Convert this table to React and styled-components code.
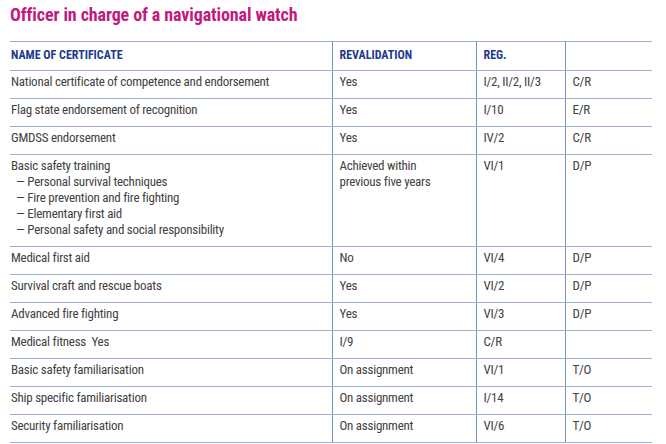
import styled, { createGlobalStyle } from "styled-components";

const GlobalStyle = createGlobalStyle`
  body {
    margin: 0;
    background: #ffffff;
    font-family: "Roboto", "Liberation Sans", sans-serif;
    font-stretch: 75%;
  }
`;

const Page = styled.div`
  padding: 4px 14px 0 10px;
`;

const Title = styled.h1`
  margin: 0;
  font-size: 18px;
  line-height: 22px;
  font-weight: 700;
  letter-spacing: -0.1px;
  color: #c1197e;
`;

const Table = styled.table`
  margin-top: 15px;
  width: 642px;
  border-collapse: collapse;
  table-layout: fixed;
  border-top: 1px solid #9fb1d3;
`;

const Th = styled.th`
  text-align: left;
  font-size: 12px;
  line-height: 16px;
  font-weight: 700;
  color: #1d3a8f;
  padding: 5px 0 7px ${(p) => (p.$first ? "1px" : "7px")};
  border-bottom: 1px solid #9fb1d3;
  border-left: ${(p) => (p.$first ? "none" : "1px solid #7890c2")};
  vertical-align: top;
`;

const Td = styled.td`
  font-size: 13px;
  line-height: 16px;
  letter-spacing: -0.25px;
  color: #424242;
  padding: 3px 0 8px ${(p) => (p.$first ? "1px" : "7px")};
  border-bottom: 1px solid #9fb1d3;
  border-left: ${(p) => (p.$first ? "none" : "1px solid #7890c2")};
  vertical-align: top;
`;

const SubItem = styled.div`
  padding-left: 5px;
`;

const Reval = styled.div`
  width: 100px;
`;

const rows = [
  ["National certificate of competence and endorsement", "Yes", "I/2, II/2, II/3", "C/R"],
  ["Flag state endorsement of recognition", "Yes", "I/10", "E/R"],
  ["GMDSS endorsement", "Yes", "IV/2", "C/R"],
  [
    "Basic safety training",
    "Achieved within previous five years",
    "VI/1",
    "D/P",
    [
      "Personal survival techniques",
      "Fire prevention and fire fighting",
      "Elementary first aid",
      "Personal safety and social responsibility",
    ],
  ],
  ["Medical first aid", "No", "VI/4", "D/P"],
  ["Survival craft and rescue boats", "Yes", "VI/2", "D/P"],
  ["Advanced fire fighting", "Yes", "VI/3", "D/P"],
  ["Medical fitness\u00a0 Yes", "I/9", "C/R", ""],
  ["Basic safety familiarisation", "On assignment", "VI/1", "T/O"],
  ["Ship specific familiarisation", "On assignment", "I/14", "T/O"],
  ["Security familiarisation", "On assignment", "VI/6", "T/O"],
];

export default function App() {
  return (
    <>
      <GlobalStyle />
      <Page>
        <Title>Officer in charge of a navigational watch</Title>
        <Table>
          <colgroup>
            <col style={{ width: 322 }} />
            <col style={{ width: 144 }} />
            <col style={{ width: 89 }} />
            <col style={{ width: 87 }} />
          </colgroup>
          <thead>
            <tr>
              <Th $first>NAME OF CERTIFICATE</Th>
              <Th>REVALIDATION</Th>
              <Th>REG.</Th>
              <Th></Th>
            </tr>
          </thead>
          <tbody>
            {rows.map(([name, reval, reg, code, subs]) => (
              <tr key={name}>
                <Td $first>
                  {name}
                  {subs &&
                    subs.map((s) => <SubItem key={s}>— {s}</SubItem>)}
                </Td>
                <Td>
                  <Reval>{reval}</Reval>
                </Td>
                <Td>{reg}</Td>
                <Td>{code}</Td>
              </tr>
            ))}
          </tbody>
        </Table>
      </Page>
    </>
  );
}
